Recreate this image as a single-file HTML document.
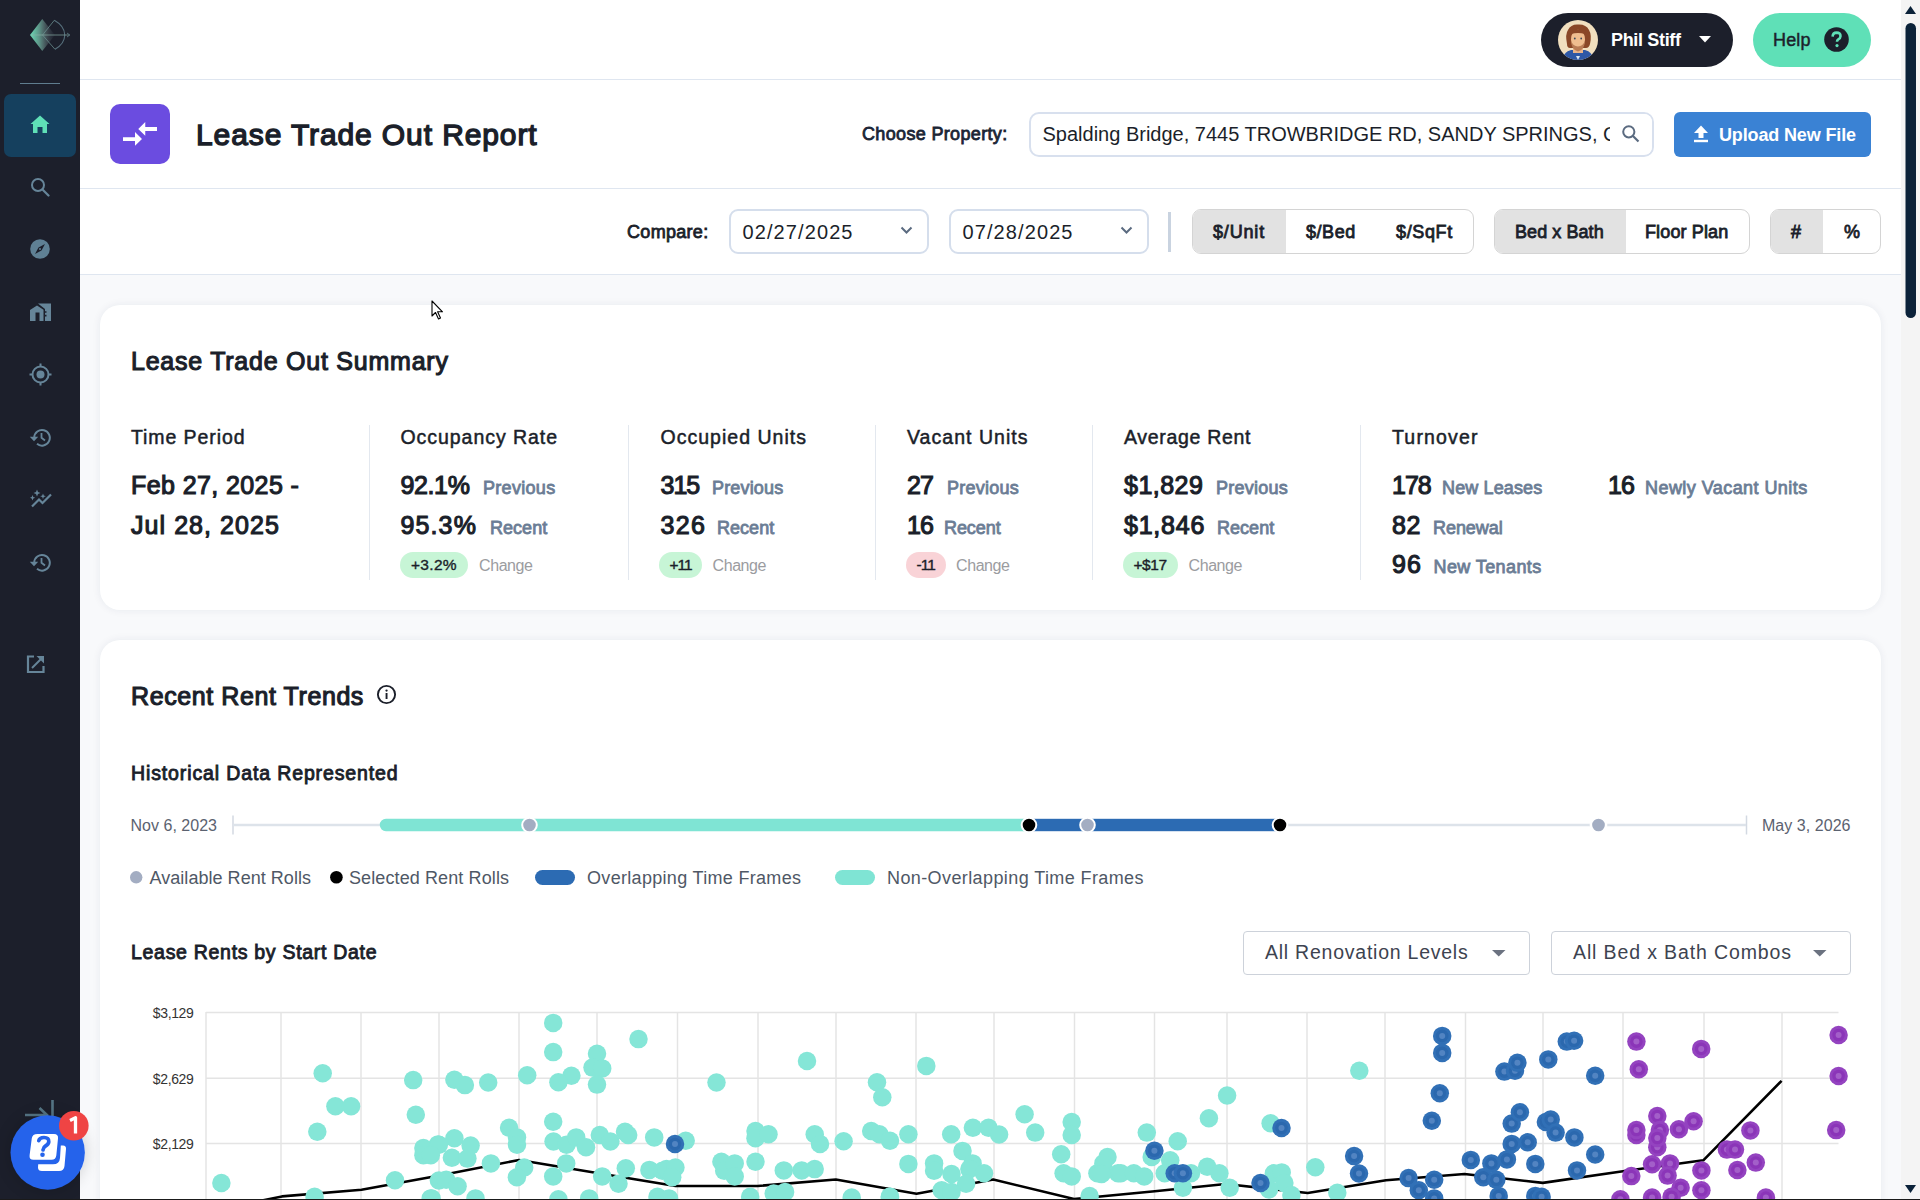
<!DOCTYPE html>
<html><head><meta charset="utf-8">
<style>
*{box-sizing:border-box;margin:0;padding:0}
html,body{width:1920px;height:1200px;overflow:hidden;background:#f8f9fb;font-family:"Liberation Sans",sans-serif;color:#1b1f2a}
.abs{position:absolute}
.t{position:absolute;white-space:nowrap;line-height:1}
#side{position:absolute;left:0;top:0;width:80px;height:1200px;background:#1c1f2b}
#hdr{position:absolute;left:80px;top:0;width:1821px;height:80px;background:#fff;border-bottom:1px solid #dfe6f0}
#ttl{position:absolute;left:80px;top:80px;width:1821px;height:109px;background:#fff;border-bottom:1px solid #dfe6f0}
#ctl{position:absolute;left:80px;top:189px;width:1821px;height:86px;background:#fff;border-bottom:1px solid #dfe6f0}
#sb{position:absolute;left:1901px;top:0;width:19px;height:1200px;background:#f4f4f4}
.card{position:absolute;left:100px;width:1781px;background:#fff;border-radius:20px;box-shadow:0 0 9px rgba(20,40,80,.075)}
</style></head><body>
<div id="hdr"></div>
<div id="ttl"></div>
<div id="ctl"></div>
<div class="card" style="top:305px;height:305px"></div>
<div class="card" style="top:640px;height:600px"></div>
<div id="sb"></div>
<div id="side"><svg class="abs" style="left:0;top:0" width="80" height="80" viewBox="0 0 80 80">
<defs><linearGradient id="lg" x1="30" y1="0" x2="56" y2="0" gradientUnits="userSpaceOnUse"><stop offset="0" stop-color="#6fe8c0" stop-opacity="0.95"/><stop offset="0.35" stop-color="#78c8b0" stop-opacity="0.7"/><stop offset="0.7" stop-color="#8aa0a0" stop-opacity="0.25"/><stop offset="1" stop-color="#5a6f80" stop-opacity="0"/></linearGradient></defs>
<polygon points="30,35 42.3,19 55,35 42.3,51" fill="url(#lg)"/>
<path d="M54.3,20.3 Q64.5,26 64.8,35 Q64.5,44 55,49.3" fill="none" stroke="#566f7c" stroke-width="1.1"/>
<path d="M54.3,20.3 L42.5,35 L55,49.3" fill="none" stroke="#6a9090" stroke-width="0.9" opacity="0.85"/>
<line x1="31" y1="35" x2="69.5" y2="35" stroke="#8ab0a8" stroke-width="0.9" opacity="0.75"/><path d="M67,33 L69.8,35 L67,37" fill="none" stroke="#5f7f88" stroke-width="0.8"/>
</svg><div class="abs" style="left:20px;top:83px;width:40px;height:1px;background:#5f7d8f"></div><div class="abs" style="left:4px;top:94px;width:72px;height:63px;border-radius:7px;background:#15405e"></div><svg class="abs" style="left:30px;top:115px" width="20" height="19" viewBox="0 0 20 19"><path d="M10,0.5 L19.5,9 L17,9 L17,18 L12.5,18 L12.5,12 L7.5,12 L7.5,18 L3,18 L3,9 L0.5,9 Z" fill="#5fe0b7"/></svg><svg class="abs" style="left:30px;top:177px" width="20" height="20" viewBox="0 0 20 20"><circle cx="8" cy="8" r="6" fill="none" stroke="#668599" stroke-width="2"/><line x1="12.5" y1="12.5" x2="18.5" y2="18.5" stroke="#668599" stroke-width="2.2" stroke-linecap="round"/></svg><svg class="abs" style="left:30px;top:239px" width="20" height="20" viewBox="0 0 20 20"><circle cx="10" cy="10" r="9.8" fill="#5f8094"/><path d="M15,5 L11.5,11.5 L5,15 L8.5,8.5 Z" fill="#1c1f2b"/><circle cx="10" cy="10" r="1" fill="#5f8094"/></svg><svg class="abs" style="left:30px;top:303px" width="22" height="19" viewBox="0 0 22 19"><path d="M0,7 L7,2.5 L13.5,6.8 L13.5,18 L9.5,18 L9.5,9.5 L5.5,9.5 L5.5,18 L0,18 Z" fill="#668599"/><path d="M8,0.5 L21,0.5 L21,18 L15,18 L15,13.5 L16.5,13.5 L16.5,11.8 L15,11.8 L15,9.8 L16.5,9.8 L16.5,8.2 L15,8.2 L15,6 Z" fill="#668599"/></svg><svg class="abs" style="left:29px;top:363px" width="23" height="23" viewBox="0 0 23 23"><circle cx="11.5" cy="11.5" r="8" fill="none" stroke="#668599" stroke-width="2"/><circle cx="11.5" cy="11.5" r="4" fill="#668599"/><path d="M11.5,0.5 V3.5 M11.5,19.5 V22.5 M0.5,11.5 H3.5 M19.5,11.5 H22.5" stroke="#668599" stroke-width="2"/></svg><svg class="abs" style="left:29px;top:428px" width="22" height="19" viewBox="0 0 22 19"><path d="M5.2,9.5 A7.8,7.8 0 1 1 8,15.8" fill="none" stroke="#668599" stroke-width="2"/><path d="M0.8,8.8 L9.2,8.8 L5,13.2 Z" fill="#668599"/><path d="M12.5,5 V9.8 L16,12.5" fill="none" stroke="#668599" stroke-width="1.8"/></svg><svg class="abs" style="left:29px;top:553px" width="22" height="19" viewBox="0 0 22 19"><path d="M5.2,9.5 A7.8,7.8 0 1 1 8,15.8" fill="none" stroke="#668599" stroke-width="2"/><path d="M0.8,8.8 L9.2,8.8 L5,13.2 Z" fill="#668599"/><path d="M12.5,5 V9.8 L16,12.5" fill="none" stroke="#668599" stroke-width="1.8"/></svg><svg class="abs" style="left:30px;top:489px" width="22" height="20" viewBox="0 0 22 20"><path d="M2,17.5 L9,10.5 L12.5,14 L21,5.5" fill="none" stroke="#668599" stroke-width="2.2"/><path d="M7,0.5 L8,3 L10.5,4 L8,5 L7,7.5 L6,5 L3.5,4 L6,3 Z" fill="#668599"/><path d="M2.5,6 L3.3,8 L5.2,8.7 L3.3,9.4 L2.5,11.4 L1.7,9.4 L-0.2,8.7 L1.7,8 Z" fill="#668599"/><path d="M13,4.5 L13.8,6.5 L15.8,7.2 L13.8,8 L13,10 L12.2,8 L10.2,7.2 L12.2,6.5 Z" fill="#668599"/></svg><svg class="abs" style="left:26px;top:655px" width="19" height="19" viewBox="0 0 19 19"><path d="M8,1.5 L2,1.5 L2,17 L17.5,17 L17.5,11" fill="none" stroke="#668599" stroke-width="2.2"/><path d="M10.5,1 L18,1 L18,8.5 Z" fill="#668599"/><line x1="6" y1="13" x2="15" y2="4" stroke="#668599" stroke-width="2"/></svg><svg class="abs" style="left:20px;top:1095px" width="40" height="25" viewBox="20 1095 40 25"><path d="M25,1115 L47,1115 M39.5,1108 L47,1115 L39.5,1122 M52.5,1100 V1125" fill="none" stroke="#557585" stroke-width="2.6"/></svg></div><div class="abs" style="left:10px;top:1115px;width:75px;height:75px;border-radius:50%;box-shadow:0 0 16px rgba(0,0,0,.18)"></div>
<svg class="abs" style="left:0;top:1095px" width="100" height="105" viewBox="0 1095 100 105"><circle cx="47.7" cy="1152.5" r="37.2" fill="#2563eb"/>
<path d="M37.5,1134 L54,1134 Q58.5,1134 58,1138.5 L56.3,1155.5 Q55.8,1159.7 51.5,1159.7 L33.5,1159.7 Q29,1159.7 29.6,1155.2 L31.8,1138.3 Q32.4,1134 37.5,1134 Z" fill="#fff"/>
<path d="M60.8,1145.5 L63,1145.5 Q66.3,1145.6 66,1149 L64.5,1166 Q64,1171 59,1171 L42,1171 Q38,1171 38,1167.5 L38.2,1164.3 L53,1164.3 Q59.5,1164.3 60,1158 Z" fill="#fff"/>
<path d="M38.8,1140.6 Q39.5,1137.5 44,1137.5 Q49.2,1137.6 48.8,1141.8 Q48.5,1144.4 45.5,1146 Q43.3,1147.2 43,1150" fill="none" stroke="#2563eb" stroke-width="3.7" stroke-linecap="round"/>
<circle cx="42.5" cy="1154.8" r="2.3" fill="#2563eb"/>
</svg>
<svg class="abs" style="left:59px;top:1111px" width="30" height="30" viewBox="0 0 30 30"><circle cx="14.8" cy="14.8" r="14.8" fill="#ef4444"/><path d="M11,9.5 L16.5,6.8 L16.5,22.5" fill="none" stroke="#fff" stroke-width="3.3" stroke-linejoin="round"/></svg><div class="abs" style="left:1541px;top:13px;width:192px;height:54px;border-radius:27px;background:#1c1f2b"></div><svg class="abs" style="left:1558px;top:20px" width="40" height="40" viewBox="0 0 40 40"><defs><clipPath id="av"><circle cx="20" cy="20" r="20"/></clipPath></defs><g clip-path="url(#av)"><rect width="40" height="40" fill="#f1dfbf"/>
<path d="M3,42 Q5,32 13,30 L27,30 Q35,32 37,42 Z" fill="#2e58a6"/><path d="M18,36 L20,40 L22,36 Z" fill="#dde6ee"/>
<rect x="15" y="25" width="10" height="8" fill="#e9b48a"/>
<path d="M9,24 Q7,14 10,10 Q13,4 20,4.5 Q28,4 31,10 Q34,15 32,24 Q31,28 28,28 L12,28 Q9,28 9,24 Z" fill="#8a4727"/>
<ellipse cx="20" cy="19.5" rx="7" ry="9.8" fill="#efbd8f"/>
<path d="M13,21 Q13.5,30 20,31.5 Q26.5,30 27,21 Q25,26 20,26.5 Q15,26 13,21 Z" fill="#b97c55"/>
<path d="M12.5,11 Q20,8 27.5,11 L27,14 Q20,12 13,14 Z" fill="#8a4727"/>
<circle cx="16.8" cy="18.5" r="0.9" fill="#3a4a5a"/><circle cx="23.2" cy="18.5" r="0.9" fill="#3a4a5a"/></g></svg><div class="t" style="left:1611.00px;top:30.76px;font-size:18px;color:#ffffff;font-weight:700;letter-spacing:-0.333px;">Phil Stiff</div>
<svg class="abs" style="left:1699px;top:36px" width="12" height="7" viewBox="0 0 12 7"><path d="M0,0 L12,0 L6,6.5 Z" fill="#fff"/></svg><div class="abs" style="left:1753px;top:13px;width:118px;height:54px;border-radius:27px;background:#5fe0b7"></div><div class="t" style="left:1773.00px;top:30.76px;font-size:18px;color:#1c1f2b;-webkit-text-stroke:0.45px #1c1f2b;letter-spacing:0.176px;">Help</div>
<svg class="abs" style="left:1824px;top:27px" width="25" height="25" viewBox="0 0 25 25"><circle cx="12.5" cy="12.5" r="12.3" fill="#1c1f2b"/><path d="M8.6,9.6 Q8.8,5.6 12.6,5.6 Q16.6,5.7 16.5,9.2 Q16.4,11.3 14.3,12.4 Q13,13.2 13,14.8" fill="none" stroke="#5fe0b7" stroke-width="2.6"/><circle cx="13" cy="18.6" r="1.6" fill="#5fe0b7"/></svg><div class="abs" style="left:110px;top:104px;width:60px;height:60px;border-radius:10px;background:#6b4ce0"></div><svg class="abs" style="left:110px;top:104px" width="60" height="60" viewBox="0 0 60 60"><path d="M28.25,25 L35.25,18 L35.25,23 L47,23 L47,27 L35.25,27 L35.25,31.75 Z" fill="#fff"/><path d="M32,35 L25,28 L25,33.25 L13,33.25 L13,37 L25,37 L25,41.75 Z" fill="#fff"/></svg><div class="t" style="left:196.00px;top:119.91px;font-size:30px;color:#1b1f2a;-webkit-text-stroke:1.35px #1b1f2a;letter-spacing:0.895px;">Lease Trade Out Report</div>
<div class="t" style="left:862.00px;top:124.76px;font-size:18px;color:#1b2535;-webkit-text-stroke:0.81px #1b2535;letter-spacing:0.341px;">Choose Property:</div>
<div class="abs" style="left:1029px;top:112px;width:625px;height:45px;border:2px solid #d8e0ee;border-radius:10px;background:#fff;overflow:hidden"><div style="position:absolute;left:582px;top:0;width:40px;height:40px;background:#fff"></div></div><div class="abs" style="left:1031px;top:114px;width:579px;height:40px;overflow:hidden"><div class="t" style="left:11.50px;top:9.67px;font-size:20px;color:#1b1f2a;">Spalding Bridge, 7445 TROWBRIDGE RD, SANDY SPRINGS, GA 30350</div>
</div><svg class="abs" style="left:1621px;top:124px" width="20" height="20" viewBox="0 0 20 20"><circle cx="7.8" cy="7.8" r="5.6" fill="none" stroke="#5b6b80" stroke-width="2"/><line x1="12" y1="12" x2="17.5" y2="17.5" stroke="#5b6b80" stroke-width="2.2"/></svg><div class="abs" style="left:1674px;top:112px;width:197px;height:45px;border-radius:6px;background:#3a82d4"></div><svg class="abs" style="left:1693px;top:125px" width="16" height="18" viewBox="0 0 16 18"><path d="M8,0.5 L15,8 L10.5,8 L10.5,13 L5.5,13 L5.5,8 L1,8 Z" fill="#fff"/><rect x="1" y="14.8" width="14" height="2.4" fill="#fff"/></svg><div class="t" style="left:1719.00px;top:125.96px;font-size:18px;color:#ffffff;font-weight:700;letter-spacing:-0.144px;">Upload New File</div>
<div class="t" style="left:627.00px;top:223.26px;font-size:18px;color:#1b1f2a;-webkit-text-stroke:0.81px #1b1f2a;letter-spacing:0.308px;">Compare:</div>
<div class="abs" style="left:729px;top:209px;width:200px;height:45px;border:2px solid #d5deec;border-radius:9px;background:#fff"></div><div class="t" style="left:742.50px;top:222.47px;font-size:20px;color:#1b1f2a;letter-spacing:1.100px;">02/27/2025</div>
<svg class="abs" style="left:900px;top:226px" width="13" height="9" viewBox="0 0 13 9"><path d="M1.5,1.5 L6.5,6.5 L11.5,1.5" fill="none" stroke="#5b6b80" stroke-width="2"/></svg><div class="abs" style="left:949px;top:209px;width:200px;height:45px;border:2px solid #d5deec;border-radius:9px;background:#fff"></div><div class="t" style="left:962.50px;top:222.47px;font-size:20px;color:#1b1f2a;letter-spacing:1.100px;">07/28/2025</div>
<svg class="abs" style="left:1120px;top:226px" width="13" height="9" viewBox="0 0 13 9"><path d="M1.5,1.5 L6.5,6.5 L11.5,1.5" fill="none" stroke="#5b6b80" stroke-width="2"/></svg><div class="abs" style="left:1168px;top:212px;width:3px;height:40px;background:#c9d3e0"></div><div class="abs" style="left:1192px;top:209px;width:282px;height:45px;border:1px solid #d4d4d4;border-radius:9px;background:#fff;overflow:hidden"><div style="position:absolute;left:0;top:0;width:93px;height:43px;background:#e2e2e2"></div></div><div class="t" style="left:1213.00px;top:223.36px;font-size:18px;color:#1b1f2a;-webkit-text-stroke:0.81px #1b1f2a;letter-spacing:0.834px;">$/Unit</div>
<div class="t" style="left:1306.00px;top:223.36px;font-size:18px;color:#1b1f2a;-webkit-text-stroke:0.81px #1b1f2a;letter-spacing:0.537px;">$/Bed</div>
<div class="t" style="left:1396.00px;top:223.36px;font-size:18px;color:#1b1f2a;-webkit-text-stroke:0.81px #1b1f2a;letter-spacing:0.633px;">$/SqFt</div>
<div class="abs" style="left:1494px;top:209px;width:256px;height:45px;border:1px solid #d4d4d4;border-radius:9px;background:#fff;overflow:hidden"><div style="position:absolute;left:0;top:0;width:131px;height:43px;background:#e2e2e2"></div></div><div class="t" style="left:1515.00px;top:223.36px;font-size:18px;color:#1b1f2a;-webkit-text-stroke:0.81px #1b1f2a;letter-spacing:0.070px;">Bed x Bath</div>
<div class="t" style="left:1645.00px;top:223.36px;font-size:18px;color:#1b1f2a;-webkit-text-stroke:0.81px #1b1f2a;letter-spacing:0.128px;">Floor Plan</div>
<div class="abs" style="left:1770px;top:209px;width:111px;height:45px;border:1px solid #d4d4d4;border-radius:9px;background:#fff;overflow:hidden"><div style="position:absolute;left:0;top:0;width:52px;height:43px;background:#e2e2e2"></div></div><div class="t" style="left:1791.00px;top:223.36px;font-size:18px;color:#1b1f2a;-webkit-text-stroke:0.81px #1b1f2a;">#</div>
<div class="t" style="left:1844.00px;top:223.36px;font-size:18px;color:#1b1f2a;-webkit-text-stroke:0.81px #1b1f2a;">%</div>
<div class="t" style="left:131.00px;top:348.84px;font-size:25px;color:#1b1f2a;-webkit-text-stroke:1.12px #1b1f2a;letter-spacing:0.761px;">Lease Trade Out Summary</div>
<div class="abs" style="left:369px;top:425px;width:1px;height:155px;background:#e3e8ef"></div><div class="abs" style="left:628px;top:425px;width:1px;height:155px;background:#e3e8ef"></div><div class="abs" style="left:875px;top:425px;width:1px;height:155px;background:#e3e8ef"></div><div class="abs" style="left:1092px;top:425px;width:1px;height:155px;background:#e3e8ef"></div><div class="abs" style="left:1360px;top:425px;width:1px;height:155px;background:#e3e8ef"></div><div class="t" style="left:131.00px;top:428.29px;font-size:19.5px;color:#1b1f2a;-webkit-text-stroke:0.49px #1b1f2a;letter-spacing:0.911px;">Time Period</div>
<div class="t" style="left:400.50px;top:428.29px;font-size:19.5px;color:#1b1f2a;-webkit-text-stroke:0.49px #1b1f2a;letter-spacing:0.950px;">Occupancy Rate</div>
<div class="t" style="left:660.50px;top:428.29px;font-size:19.5px;color:#1b1f2a;-webkit-text-stroke:0.49px #1b1f2a;letter-spacing:1.022px;">Occupied Units</div>
<div class="t" style="left:907.00px;top:428.29px;font-size:19.5px;color:#1b1f2a;-webkit-text-stroke:0.49px #1b1f2a;letter-spacing:1.037px;">Vacant Units</div>
<div class="t" style="left:1124.00px;top:428.29px;font-size:19.5px;color:#1b1f2a;-webkit-text-stroke:0.49px #1b1f2a;letter-spacing:0.693px;">Average Rent</div>
<div class="t" style="left:1392.00px;top:428.29px;font-size:19.5px;color:#1b1f2a;-webkit-text-stroke:0.49px #1b1f2a;letter-spacing:1.172px;">Turnover</div>
<div class="t" style="left:131.00px;top:472.84px;font-size:25px;color:#1b1f2a;-webkit-text-stroke:1.12px #1b1f2a;letter-spacing:0.405px;">Feb 27, 2025 -</div>
<div class="t" style="left:131.00px;top:512.84px;font-size:25px;color:#1b1f2a;-webkit-text-stroke:1.12px #1b1f2a;letter-spacing:1.059px;">Jul 28, 2025</div>
<div class="t" style="left:400.50px;top:472.84px;font-size:25px;color:#1b1f2a;-webkit-text-stroke:1.12px #1b1f2a;letter-spacing:-0.378px;">92.1%</div>
<div class="t" style="left:400.50px;top:512.84px;font-size:25px;color:#1b1f2a;-webkit-text-stroke:1.12px #1b1f2a;letter-spacing:1.122px;">95.3%</div>
<div class="t" style="left:660.50px;top:472.84px;font-size:25px;color:#1b1f2a;-webkit-text-stroke:1.12px #1b1f2a;letter-spacing:-1.000px;">315</div>
<div class="t" style="left:660.50px;top:512.84px;font-size:25px;color:#1b1f2a;-webkit-text-stroke:1.12px #1b1f2a;letter-spacing:1.331px;">326</div>
<div class="t" style="left:907.00px;top:472.84px;font-size:25px;color:#1b1f2a;-webkit-text-stroke:1.12px #1b1f2a;letter-spacing:-0.934px;">27</div>
<div class="t" style="left:907.00px;top:512.84px;font-size:25px;color:#1b1f2a;-webkit-text-stroke:1.12px #1b1f2a;letter-spacing:-1.000px;">16</div>
<div class="t" style="left:1124.00px;top:472.84px;font-size:25px;color:#1b1f2a;-webkit-text-stroke:1.12px #1b1f2a;letter-spacing:0.482px;">$1,829</div>
<div class="t" style="left:1124.00px;top:512.84px;font-size:25px;color:#1b1f2a;-webkit-text-stroke:1.12px #1b1f2a;letter-spacing:0.782px;">$1,846</div>
<div class="t" style="left:1392.00px;top:472.84px;font-size:25px;color:#1b1f2a;-webkit-text-stroke:1.12px #1b1f2a;letter-spacing:-1.000px;">178</div>
<div class="t" style="left:1392.00px;top:512.84px;font-size:25px;color:#1b1f2a;-webkit-text-stroke:1.12px #1b1f2a;letter-spacing:0.566px;">82</div>
<div class="t" style="left:1392.00px;top:551.84px;font-size:25px;color:#1b1f2a;-webkit-text-stroke:1.12px #1b1f2a;letter-spacing:1.066px;">96</div>
<div class="t" style="left:1608.00px;top:472.84px;font-size:25px;color:#1b1f2a;-webkit-text-stroke:1.12px #1b1f2a;letter-spacing:-1.000px;">16</div>
<div class="t" style="left:483.00px;top:478.76px;font-size:18px;color:#6b7d95;-webkit-text-stroke:0.81px #6b7d95;letter-spacing:0.308px;">Previous</div>
<div class="t" style="left:490.00px;top:518.76px;font-size:18px;color:#6b7d95;-webkit-text-stroke:0.81px #6b7d95;letter-spacing:0.031px;">Recent</div>
<div class="t" style="left:712.00px;top:478.76px;font-size:18px;color:#6b7d95;-webkit-text-stroke:0.81px #6b7d95;letter-spacing:0.165px;">Previous</div>
<div class="t" style="left:717.00px;top:518.76px;font-size:18px;color:#6b7d95;-webkit-text-stroke:0.81px #6b7d95;letter-spacing:0.031px;">Recent</div>
<div class="t" style="left:947.00px;top:478.76px;font-size:18px;color:#6b7d95;-webkit-text-stroke:0.81px #6b7d95;letter-spacing:0.237px;">Previous</div>
<div class="t" style="left:944.00px;top:518.76px;font-size:18px;color:#6b7d95;-webkit-text-stroke:0.81px #6b7d95;letter-spacing:-0.069px;">Recent</div>
<div class="t" style="left:1216.00px;top:478.76px;font-size:18px;color:#6b7d95;-webkit-text-stroke:0.81px #6b7d95;letter-spacing:0.237px;">Previous</div>
<div class="t" style="left:1217.00px;top:518.76px;font-size:18px;color:#6b7d95;-webkit-text-stroke:0.81px #6b7d95;letter-spacing:0.031px;">Recent</div>
<div class="t" style="left:1442.00px;top:478.76px;font-size:18px;color:#6b7d95;-webkit-text-stroke:0.81px #6b7d95;letter-spacing:0.126px;">New Leases</div>
<div class="t" style="left:1433.00px;top:518.76px;font-size:18px;color:#6b7d95;-webkit-text-stroke:0.81px #6b7d95;letter-spacing:-0.059px;">Renewal</div>
<div class="t" style="left:1433.50px;top:557.76px;font-size:18px;color:#6b7d95;-webkit-text-stroke:0.81px #6b7d95;letter-spacing:0.396px;">New Tenants</div>
<div class="t" style="left:1645.00px;top:478.76px;font-size:18px;color:#6b7d95;-webkit-text-stroke:0.81px #6b7d95;letter-spacing:0.439px;">Newly Vacant Units</div>
<div class="abs" style="left:400px;top:552px;width:68px;height:26px;border-radius:13px;background:#c7f5d6"></div><div class="t" style="left:411.00px;top:556.88px;font-size:15.5px;color:#1b1f2a;-webkit-text-stroke:0.39px #1b1f2a;letter-spacing:0.308px;">+3.2%</div>
<div class="abs" style="left:659px;top:552px;width:43px;height:26px;border-radius:13px;background:#c7f5d6"></div><div class="t" style="left:669.50px;top:556.88px;font-size:15.5px;color:#1b1f2a;-webkit-text-stroke:0.39px #1b1f2a;letter-spacing:-1.000px;">+11</div>
<div class="abs" style="left:906px;top:552px;width:40px;height:26px;border-radius:13px;background:#f9d3d7"></div><div class="t" style="left:916.50px;top:556.88px;font-size:15.5px;color:#1b1f2a;-webkit-text-stroke:0.39px #1b1f2a;letter-spacing:-1.000px;">-11</div>
<div class="abs" style="left:1123px;top:552px;width:55px;height:26px;border-radius:13px;background:#c7f5d6"></div><div class="t" style="left:1133.50px;top:556.88px;font-size:15.5px;color:#1b1f2a;-webkit-text-stroke:0.39px #1b1f2a;letter-spacing:-0.434px;">+$17</div>
<div class="t" style="left:479.00px;top:557.76px;font-size:16px;color:#9b9c9f;letter-spacing:-0.410px;">Change</div>
<div class="t" style="left:712.50px;top:557.76px;font-size:16px;color:#9b9c9f;letter-spacing:-0.410px;">Change</div>
<div class="t" style="left:956.00px;top:557.76px;font-size:16px;color:#9b9c9f;letter-spacing:-0.410px;">Change</div>
<div class="t" style="left:1188.50px;top:557.76px;font-size:16px;color:#9b9c9f;letter-spacing:-0.410px;">Change</div>
<div class="t" style="left:131.00px;top:683.54px;font-size:25px;color:#1b1f2a;-webkit-text-stroke:1.12px #1b1f2a;letter-spacing:0.590px;">Recent Rent Trends</div>
<svg class="abs" style="left:376px;top:684px" width="21" height="21" viewBox="0 0 21 21"><circle cx="10.5" cy="10.5" r="8.6" fill="none" stroke="#1b1f2a" stroke-width="1.9"/><rect x="9.6" y="9" width="1.9" height="6" fill="#1b1f2a"/><circle cx="10.55" cy="6.6" r="1.15" fill="#1b1f2a"/></svg><div class="t" style="left:131.00px;top:763.74px;font-size:19.5px;color:#1b1f2a;-webkit-text-stroke:0.88px #1b1f2a;letter-spacing:0.875px;">Historical Data Represented</div>
<div class="t" style="left:130.50px;top:817.96px;font-size:16px;color:#5b6270;letter-spacing:0.022px;">Nov 6, 2023</div>
<div class="t" style="left:1762.00px;top:817.66px;font-size:16px;color:#5b6270;letter-spacing:0.044px;">May 3, 2026</div>
<svg class="abs" style="left:200px;top:800px" width="1600" height="50" viewBox="200 800 1600 50">
<line x1="233" y1="815.5" x2="233" y2="834.5" stroke="#d3d9e2" stroke-width="1.5"/>
<line x1="1746.5" y1="815.5" x2="1746.5" y2="834.5" stroke="#d3d9e2" stroke-width="1.5"/>
<line x1="233" y1="825" x2="1746" y2="825" stroke="#dde3ea" stroke-width="2.5"/>
<path d="M386,818.8 L1029,818.8 L1029,831.2 L386,831.2 A6.2,6.2 0 0 1 386,818.8 Z" fill="#7fe4d4"/>
<rect x="1029" y="818.8" width="251" height="12.4" fill="#2c6bb3"/>
<circle cx="529.5" cy="825" r="7.3" fill="#a3adc2" stroke="#fff" stroke-width="2"/>
<circle cx="1087.5" cy="825" r="7.3" fill="#a3adc2" stroke="#fff" stroke-width="2"/>
<circle cx="1598.5" cy="825" r="7.6" fill="#a3adc2" stroke="#fff" stroke-width="2.5"/>
<circle cx="1029" cy="825" r="7.3" fill="#000" stroke="#fff" stroke-width="2"/>
<circle cx="1280" cy="825" r="7.3" fill="#000" stroke="#fff" stroke-width="2"/>
</svg><svg class="abs" style="left:125px;top:865px" width="760" height="25" viewBox="125 865 760 25"><circle cx="136.2" cy="877.3" r="6.2" fill="#a3adc2"/><circle cx="336.4" cy="877.3" r="6.3" fill="#000"/><rect x="535" y="870" width="40" height="15" rx="7.5" fill="#2c6bb3"/><rect x="835" y="870" width="40" height="15" rx="7.5" fill="#7fe4d4"/></svg><div class="t" style="left:149.50px;top:868.76px;font-size:18px;color:#4f5866;letter-spacing:0.039px;">Available Rent Rolls</div>
<div class="t" style="left:349.00px;top:868.76px;font-size:18px;color:#4f5866;letter-spacing:0.106px;">Selected Rent Rolls</div>
<div class="t" style="left:587.00px;top:868.76px;font-size:18px;color:#4f5866;letter-spacing:0.315px;">Overlapping Time Frames</div>
<div class="t" style="left:887.00px;top:868.76px;font-size:18px;color:#4f5866;letter-spacing:0.400px;">Non-Overlapping Time Frames</div>
<div class="t" style="left:131.00px;top:943.19px;font-size:19.5px;color:#1b1f2a;-webkit-text-stroke:0.88px #1b1f2a;letter-spacing:0.701px;">Lease Rents by Start Date</div>
<div class="abs" style="left:1243px;top:931px;width:287px;height:44px;border:1px solid #cdd2da;border-radius:4px;background:#fff"></div><div class="t" style="left:1265.00px;top:943.49px;font-size:19.5px;color:#3d4350;letter-spacing:0.758px;">All Renovation Levels</div>
<svg class="abs" style="left:1492px;top:950px" width="14" height="7" viewBox="0 0 14 7"><path d="M0,0 L13.5,0 L6.75,6.5 Z" fill="#6b7280"/></svg><div class="abs" style="left:1551px;top:931px;width:300px;height:44px;border:1px solid #cdd2da;border-radius:4px;background:#fff"></div><div class="t" style="left:1573.00px;top:943.49px;font-size:19.5px;color:#3d4350;letter-spacing:0.874px;">All Bed x Bath Combos</div>
<svg class="abs" style="left:1813px;top:950px" width="14" height="7" viewBox="0 0 14 7"><path d="M0,0 L13.5,0 L6.75,6.5 Z" fill="#6b7280"/></svg><svg class="abs" style="left:100px;top:995px" width="1780" height="205" viewBox="100 995 1780 205"><line x1="206" y1="1012.5" x2="1838.5" y2="1012.5" stroke="#e4e4e4" stroke-width="1.5"/><line x1="206" y1="1078.3" x2="1838.5" y2="1078.3" stroke="#e4e4e4" stroke-width="1.5"/><line x1="206" y1="1143.5" x2="1838.5" y2="1143.5" stroke="#e4e4e4" stroke-width="1.5"/><line x1="206.0" y1="1012" x2="206.0" y2="1200" stroke="#e4e4e4" stroke-width="1.5"/><line x1="281.0" y1="1012" x2="281.0" y2="1200" stroke="#e4e4e4" stroke-width="1.5"/><line x1="361.0" y1="1012" x2="361.0" y2="1200" stroke="#e4e4e4" stroke-width="1.5"/><line x1="439.0" y1="1012" x2="439.0" y2="1200" stroke="#e4e4e4" stroke-width="1.5"/><line x1="519.0" y1="1012" x2="519.0" y2="1200" stroke="#e4e4e4" stroke-width="1.5"/><line x1="597.0" y1="1012" x2="597.0" y2="1200" stroke="#e4e4e4" stroke-width="1.5"/><line x1="677.5" y1="1012" x2="677.5" y2="1200" stroke="#e4e4e4" stroke-width="1.5"/><line x1="758.0" y1="1012" x2="758.0" y2="1200" stroke="#e4e4e4" stroke-width="1.5"/><line x1="836.0" y1="1012" x2="836.0" y2="1200" stroke="#e4e4e4" stroke-width="1.5"/><line x1="916.0" y1="1012" x2="916.0" y2="1200" stroke="#e4e4e4" stroke-width="1.5"/><line x1="994.0" y1="1012" x2="994.0" y2="1200" stroke="#e4e4e4" stroke-width="1.5"/><line x1="1074.5" y1="1012" x2="1074.5" y2="1200" stroke="#e4e4e4" stroke-width="1.5"/><line x1="1154.5" y1="1012" x2="1154.5" y2="1200" stroke="#e4e4e4" stroke-width="1.5"/><line x1="1227.0" y1="1012" x2="1227.0" y2="1200" stroke="#e4e4e4" stroke-width="1.5"/><line x1="1307.0" y1="1012" x2="1307.0" y2="1200" stroke="#e4e4e4" stroke-width="1.5"/><line x1="1385.0" y1="1012" x2="1385.0" y2="1200" stroke="#e4e4e4" stroke-width="1.5"/><line x1="1465.5" y1="1012" x2="1465.5" y2="1200" stroke="#e4e4e4" stroke-width="1.5"/><line x1="1543.0" y1="1012" x2="1543.0" y2="1200" stroke="#e4e4e4" stroke-width="1.5"/><line x1="1623.0" y1="1012" x2="1623.0" y2="1200" stroke="#e4e4e4" stroke-width="1.5"/><line x1="1704.0" y1="1012" x2="1704.0" y2="1200" stroke="#e4e4e4" stroke-width="1.5"/><line x1="1782.0" y1="1012" x2="1782.0" y2="1200" stroke="#e4e4e4" stroke-width="1.5"/><polyline points="206.0,1212.0 282.0,1196.4 361.5,1189.8 439.6,1175.5 519.0,1160.0 597.0,1173.0 675.6,1186.0 757.7,1186.0 835.8,1179.5 916.5,1193.8 993.3,1179.5 1074.0,1199.0 1154.8,1191.2 1225.7,1184.0 1307.7,1193.0 1386.0,1180.3 1464.5,1174.0 1542.8,1182.9 1623.0,1171.2 1703.3,1160.3 1781.6,1080.8" fill="none" stroke="#000" stroke-width="2.6" stroke-linejoin="round"/><circle cx="221.4" cy="1183.0" r="9.25" fill="#85e6d7"/><circle cx="322.7" cy="1073.2" r="9.25" fill="#85e6d7"/><circle cx="335.4" cy="1106.2" r="9.25" fill="#85e6d7"/><circle cx="351.1" cy="1106.2" r="9.25" fill="#85e6d7"/><circle cx="317.3" cy="1131.7" r="9.25" fill="#85e6d7"/><circle cx="314.6" cy="1196.7" r="9.25" fill="#85e6d7"/><circle cx="413.2" cy="1080.1" r="9.25" fill="#85e6d7"/><circle cx="415.8" cy="1114.7" r="9.25" fill="#85e6d7"/><circle cx="423.4" cy="1148.0" r="9.25" fill="#85e6d7"/><circle cx="423.4" cy="1155.3" r="9.25" fill="#85e6d7"/><circle cx="438.0" cy="1144.4" r="9.25" fill="#85e6d7"/><circle cx="395.0" cy="1180.2" r="9.25" fill="#85e6d7"/><circle cx="430.7" cy="1198.4" r="9.25" fill="#85e6d7"/><circle cx="438.9" cy="1180.5" r="9.25" fill="#85e6d7"/><circle cx="553.2" cy="1022.9" r="9.25" fill="#85e6d7"/><circle cx="553.2" cy="1052.1" r="9.25" fill="#85e6d7"/><circle cx="638.5" cy="1039.1" r="9.25" fill="#85e6d7"/><circle cx="597.0" cy="1053.7" r="9.25" fill="#85e6d7"/><circle cx="592.5" cy="1067.6" r="9.25" fill="#85e6d7"/><circle cx="602.2" cy="1068.4" r="9.25" fill="#85e6d7"/><circle cx="597.0" cy="1084.6" r="9.25" fill="#85e6d7"/><circle cx="571.4" cy="1075.7" r="9.25" fill="#85e6d7"/><circle cx="558.4" cy="1082.2" r="9.25" fill="#85e6d7"/><circle cx="527.2" cy="1075.2" r="9.25" fill="#85e6d7"/><circle cx="454.4" cy="1079.7" r="9.25" fill="#85e6d7"/><circle cx="464.9" cy="1085.1" r="9.25" fill="#85e6d7"/><circle cx="488.2" cy="1082.5" r="9.25" fill="#85e6d7"/><circle cx="509.1" cy="1127.7" r="9.25" fill="#85e6d7"/><circle cx="517.0" cy="1137.4" r="9.25" fill="#85e6d7"/><circle cx="517.0" cy="1144.7" r="9.25" fill="#85e6d7"/><circle cx="553.2" cy="1121.7" r="9.25" fill="#85e6d7"/><circle cx="454.4" cy="1138.2" r="9.25" fill="#85e6d7"/><circle cx="438.9" cy="1144.7" r="9.25" fill="#85e6d7"/><circle cx="451.9" cy="1157.7" r="9.25" fill="#85e6d7"/><circle cx="470.6" cy="1145.6" r="9.25" fill="#85e6d7"/><circle cx="467.4" cy="1158.6" r="9.25" fill="#85e6d7"/><circle cx="430.8" cy="1155.3" r="9.25" fill="#85e6d7"/><circle cx="553.5" cy="1141.5" r="9.25" fill="#85e6d7"/><circle cx="566.5" cy="1144.7" r="9.25" fill="#85e6d7"/><circle cx="576.2" cy="1137.4" r="9.25" fill="#85e6d7"/><circle cx="586.0" cy="1147.2" r="9.25" fill="#85e6d7"/><circle cx="599.8" cy="1135.0" r="9.25" fill="#85e6d7"/><circle cx="610.4" cy="1141.5" r="9.25" fill="#85e6d7"/><circle cx="625.0" cy="1131.7" r="9.25" fill="#85e6d7"/><circle cx="628.2" cy="1135.0" r="9.25" fill="#85e6d7"/><circle cx="654.2" cy="1137.4" r="9.25" fill="#85e6d7"/><circle cx="490.9" cy="1163.4" r="9.25" fill="#85e6d7"/><circle cx="524.2" cy="1167.5" r="9.25" fill="#85e6d7"/><circle cx="516.9" cy="1177.2" r="9.25" fill="#85e6d7"/><circle cx="553.2" cy="1176.4" r="9.25" fill="#85e6d7"/><circle cx="566.2" cy="1163.4" r="9.25" fill="#85e6d7"/><circle cx="602.2" cy="1176.4" r="9.25" fill="#85e6d7"/><circle cx="618.5" cy="1183.7" r="9.25" fill="#85e6d7"/><circle cx="625.8" cy="1168.3" r="9.25" fill="#85e6d7"/><circle cx="649.4" cy="1169.9" r="9.25" fill="#85e6d7"/><circle cx="662.4" cy="1170.7" r="9.25" fill="#85e6d7"/><circle cx="446.2" cy="1179.7" r="9.25" fill="#85e6d7"/><circle cx="457.6" cy="1186.2" r="9.25" fill="#85e6d7"/><circle cx="475.5" cy="1198.4" r="9.25" fill="#85e6d7"/><circle cx="558.4" cy="1199.2" r="9.25" fill="#85e6d7"/><circle cx="589.2" cy="1198.4" r="9.25" fill="#85e6d7"/><circle cx="657.5" cy="1196.7" r="9.25" fill="#85e6d7"/><circle cx="431.6" cy="1198.4" r="9.25" fill="#85e6d7"/><circle cx="685.7" cy="1140.7" r="9.25" fill="#85e6d7"/><circle cx="716.5" cy="1082.5" r="9.25" fill="#85e6d7"/><circle cx="807.0" cy="1061.0" r="9.25" fill="#85e6d7"/><circle cx="877.0" cy="1082.2" r="9.25" fill="#85e6d7"/><circle cx="882.3" cy="1097.3" r="9.25" fill="#85e6d7"/><circle cx="666.5" cy="1169.1" r="9.25" fill="#85e6d7"/><circle cx="675.4" cy="1167.5" r="9.25" fill="#85e6d7"/><circle cx="672.2" cy="1177.2" r="9.25" fill="#85e6d7"/><circle cx="721.4" cy="1161.8" r="9.25" fill="#85e6d7"/><circle cx="724.2" cy="1170.7" r="9.25" fill="#85e6d7"/><circle cx="734.7" cy="1163.4" r="9.25" fill="#85e6d7"/><circle cx="734.7" cy="1176.4" r="9.25" fill="#85e6d7"/><circle cx="755.5" cy="1161.8" r="9.25" fill="#85e6d7"/><circle cx="755.5" cy="1131.0" r="9.25" fill="#85e6d7"/><circle cx="755.5" cy="1138.2" r="9.25" fill="#85e6d7"/><circle cx="768.5" cy="1134.2" r="9.25" fill="#85e6d7"/><circle cx="783.8" cy="1170.4" r="9.25" fill="#85e6d7"/><circle cx="801.7" cy="1170.4" r="9.25" fill="#85e6d7"/><circle cx="814.7" cy="1169.1" r="9.25" fill="#85e6d7"/><circle cx="814.7" cy="1134.2" r="9.25" fill="#85e6d7"/><circle cx="820.0" cy="1144.0" r="9.25" fill="#85e6d7"/><circle cx="843.6" cy="1141.2" r="9.25" fill="#85e6d7"/><circle cx="871.2" cy="1131.0" r="9.25" fill="#85e6d7"/><circle cx="879.4" cy="1134.2" r="9.25" fill="#85e6d7"/><circle cx="890.0" cy="1140.7" r="9.25" fill="#85e6d7"/><circle cx="669.0" cy="1198.4" r="9.25" fill="#85e6d7"/><circle cx="750.2" cy="1196.7" r="9.25" fill="#85e6d7"/><circle cx="773.7" cy="1193.5" r="9.25" fill="#85e6d7"/><circle cx="785.1" cy="1191.9" r="9.25" fill="#85e6d7"/><circle cx="851.7" cy="1197.6" r="9.25" fill="#85e6d7"/><circle cx="890.0" cy="1196.7" r="9.25" fill="#85e6d7"/><circle cx="926.3" cy="1065.9" r="9.25" fill="#85e6d7"/><circle cx="908.4" cy="1134.2" r="9.25" fill="#85e6d7"/><circle cx="908.4" cy="1163.9" r="9.25" fill="#85e6d7"/><circle cx="934.1" cy="1163.4" r="9.25" fill="#85e6d7"/><circle cx="934.1" cy="1170.7" r="9.25" fill="#85e6d7"/><circle cx="951.2" cy="1134.2" r="9.25" fill="#85e6d7"/><circle cx="962.5" cy="1150.9" r="9.25" fill="#85e6d7"/><circle cx="972.9" cy="1127.7" r="9.25" fill="#85e6d7"/><circle cx="988.5" cy="1127.7" r="9.25" fill="#85e6d7"/><circle cx="999.1" cy="1134.5" r="9.25" fill="#85e6d7"/><circle cx="1024.6" cy="1114.2" r="9.25" fill="#85e6d7"/><circle cx="1035.2" cy="1132.6" r="9.25" fill="#85e6d7"/><circle cx="1071.7" cy="1122.0" r="9.25" fill="#85e6d7"/><circle cx="1071.7" cy="1135.0" r="9.25" fill="#85e6d7"/><circle cx="1061.2" cy="1154.2" r="9.25" fill="#85e6d7"/><circle cx="1063.6" cy="1173.2" r="9.25" fill="#85e6d7"/><circle cx="1071.7" cy="1176.4" r="9.25" fill="#85e6d7"/><circle cx="1097.4" cy="1173.2" r="9.25" fill="#85e6d7"/><circle cx="1107.5" cy="1157.0" r="9.25" fill="#85e6d7"/><circle cx="1103.4" cy="1163.4" r="9.25" fill="#85e6d7"/><circle cx="1118.0" cy="1173.2" r="9.25" fill="#85e6d7"/><circle cx="972.6" cy="1163.4" r="9.25" fill="#85e6d7"/><circle cx="969.4" cy="1169.1" r="9.25" fill="#85e6d7"/><circle cx="951.5" cy="1174.0" r="9.25" fill="#85e6d7"/><circle cx="984.0" cy="1173.2" r="9.25" fill="#85e6d7"/><circle cx="966.1" cy="1183.7" r="9.25" fill="#85e6d7"/><circle cx="941.7" cy="1190.2" r="9.25" fill="#85e6d7"/><circle cx="951.5" cy="1191.9" r="9.25" fill="#85e6d7"/><circle cx="1089.6" cy="1196.0" r="9.25" fill="#85e6d7"/><circle cx="889.8" cy="1196.7" r="9.25" fill="#85e6d7"/><circle cx="1227.1" cy="1095.5" r="9.25" fill="#85e6d7"/><circle cx="1208.9" cy="1118.3" r="9.25" fill="#85e6d7"/><circle cx="1270.6" cy="1123.3" r="9.25" fill="#85e6d7"/><circle cx="1146.8" cy="1132.6" r="9.25" fill="#85e6d7"/><circle cx="1177.7" cy="1141.2" r="9.25" fill="#85e6d7"/><circle cx="1101.6" cy="1174.0" r="9.25" fill="#85e6d7"/><circle cx="1120.8" cy="1173.2" r="9.25" fill="#85e6d7"/><circle cx="1133.8" cy="1173.2" r="9.25" fill="#85e6d7"/><circle cx="1144.2" cy="1176.4" r="9.25" fill="#85e6d7"/><circle cx="1151.7" cy="1156.9" r="9.25" fill="#85e6d7"/><circle cx="1170.2" cy="1160.2" r="9.25" fill="#85e6d7"/><circle cx="1164.7" cy="1173.2" r="9.25" fill="#85e6d7"/><circle cx="1191.0" cy="1173.2" r="9.25" fill="#85e6d7"/><circle cx="1207.2" cy="1166.7" r="9.25" fill="#85e6d7"/><circle cx="1219.4" cy="1173.2" r="9.25" fill="#85e6d7"/><circle cx="1182.9" cy="1187.8" r="9.25" fill="#85e6d7"/><circle cx="1229.7" cy="1187.8" r="9.25" fill="#85e6d7"/><circle cx="1273.9" cy="1173.2" r="9.25" fill="#85e6d7"/><circle cx="1281.7" cy="1172.4" r="9.25" fill="#85e6d7"/><circle cx="1284.4" cy="1183.0" r="9.25" fill="#85e6d7"/><circle cx="1269.0" cy="1189.4" r="9.25" fill="#85e6d7"/><circle cx="1291.4" cy="1195.1" r="9.25" fill="#85e6d7"/><circle cx="1315.3" cy="1167.2" r="9.25" fill="#85e6d7"/><circle cx="1337.3" cy="1192.7" r="9.25" fill="#85e6d7"/><circle cx="1359.3" cy="1070.8" r="9.25" fill="#85e6d7"/><circle cx="675.0" cy="1144.0" r="9.25" fill="#3170b6"/><circle cx="675.0" cy="1144.0" r="6.3" fill="#2b68ae"/><circle cx="675.0" cy="1144.0" r="3" fill="#5284c2"/><circle cx="1281.5" cy="1128.0" r="9.25" fill="#3170b6"/><circle cx="1281.5" cy="1128.0" r="6.3" fill="#2b68ae"/><circle cx="1281.5" cy="1128.0" r="3" fill="#5284c2"/><circle cx="1154.4" cy="1150.8" r="9.25" fill="#3170b6"/><circle cx="1154.4" cy="1150.8" r="6.3" fill="#2b68ae"/><circle cx="1154.4" cy="1150.8" r="3" fill="#5284c2"/><circle cx="1174.7" cy="1173.2" r="9.25" fill="#3170b6"/><circle cx="1174.7" cy="1173.2" r="6.3" fill="#2b68ae"/><circle cx="1174.7" cy="1173.2" r="3" fill="#5284c2"/><circle cx="1182.9" cy="1173.2" r="9.25" fill="#3170b6"/><circle cx="1182.9" cy="1173.2" r="6.3" fill="#2b68ae"/><circle cx="1182.9" cy="1173.2" r="3" fill="#5284c2"/><circle cx="1260.5" cy="1183.0" r="9.25" fill="#3170b6"/><circle cx="1260.5" cy="1183.0" r="6.3" fill="#2b68ae"/><circle cx="1260.5" cy="1183.0" r="3" fill="#5284c2"/><circle cx="1442.2" cy="1035.9" r="9.25" fill="#3170b6"/><circle cx="1442.2" cy="1035.9" r="6.3" fill="#2b68ae"/><circle cx="1442.2" cy="1035.9" r="3" fill="#5284c2"/><circle cx="1442.2" cy="1052.9" r="9.25" fill="#3170b6"/><circle cx="1442.2" cy="1052.9" r="6.3" fill="#2b68ae"/><circle cx="1442.2" cy="1052.9" r="3" fill="#5284c2"/><circle cx="1439.8" cy="1093.2" r="9.25" fill="#3170b6"/><circle cx="1439.8" cy="1093.2" r="6.3" fill="#2b68ae"/><circle cx="1439.8" cy="1093.2" r="3" fill="#5284c2"/><circle cx="1431.8" cy="1120.7" r="9.25" fill="#3170b6"/><circle cx="1431.8" cy="1120.7" r="6.3" fill="#2b68ae"/><circle cx="1431.8" cy="1120.7" r="3" fill="#5284c2"/><circle cx="1354.1" cy="1156.1" r="9.25" fill="#3170b6"/><circle cx="1354.1" cy="1156.1" r="6.3" fill="#2b68ae"/><circle cx="1354.1" cy="1156.1" r="3" fill="#5284c2"/><circle cx="1359.0" cy="1173.5" r="9.25" fill="#3170b6"/><circle cx="1359.0" cy="1173.5" r="6.3" fill="#2b68ae"/><circle cx="1359.0" cy="1173.5" r="3" fill="#5284c2"/><circle cx="1408.6" cy="1178.1" r="9.25" fill="#3170b6"/><circle cx="1408.6" cy="1178.1" r="6.3" fill="#2b68ae"/><circle cx="1408.6" cy="1178.1" r="3" fill="#5284c2"/><circle cx="1418.8" cy="1190.2" r="9.25" fill="#3170b6"/><circle cx="1418.8" cy="1190.2" r="6.3" fill="#2b68ae"/><circle cx="1418.8" cy="1190.2" r="3" fill="#5284c2"/><circle cx="1434.2" cy="1179.7" r="9.25" fill="#3170b6"/><circle cx="1434.2" cy="1179.7" r="6.3" fill="#2b68ae"/><circle cx="1434.2" cy="1179.7" r="3" fill="#5284c2"/><circle cx="1434.2" cy="1198.4" r="9.25" fill="#3170b6"/><circle cx="1434.2" cy="1198.4" r="6.3" fill="#2b68ae"/><circle cx="1434.2" cy="1198.4" r="3" fill="#5284c2"/><circle cx="1470.8" cy="1159.9" r="9.25" fill="#3170b6"/><circle cx="1470.8" cy="1159.9" r="6.3" fill="#2b68ae"/><circle cx="1470.8" cy="1159.9" r="3" fill="#5284c2"/><circle cx="1483.3" cy="1177.2" r="9.25" fill="#3170b6"/><circle cx="1483.3" cy="1177.2" r="6.3" fill="#2b68ae"/><circle cx="1483.3" cy="1177.2" r="3" fill="#5284c2"/><circle cx="1491.4" cy="1163.4" r="9.25" fill="#3170b6"/><circle cx="1491.4" cy="1163.4" r="6.3" fill="#2b68ae"/><circle cx="1491.4" cy="1163.4" r="3" fill="#5284c2"/><circle cx="1496.3" cy="1179.7" r="9.25" fill="#3170b6"/><circle cx="1496.3" cy="1179.7" r="6.3" fill="#2b68ae"/><circle cx="1496.3" cy="1179.7" r="3" fill="#5284c2"/><circle cx="1506.9" cy="1159.4" r="9.25" fill="#3170b6"/><circle cx="1506.9" cy="1159.4" r="6.3" fill="#2b68ae"/><circle cx="1506.9" cy="1159.4" r="3" fill="#5284c2"/><circle cx="1498.7" cy="1195.9" r="9.25" fill="#3170b6"/><circle cx="1498.7" cy="1195.9" r="6.3" fill="#2b68ae"/><circle cx="1498.7" cy="1195.9" r="3" fill="#5284c2"/><circle cx="1511.7" cy="1143.9" r="9.25" fill="#3170b6"/><circle cx="1511.7" cy="1143.9" r="6.3" fill="#2b68ae"/><circle cx="1511.7" cy="1143.9" r="3" fill="#5284c2"/><circle cx="1527.7" cy="1142.3" r="9.25" fill="#3170b6"/><circle cx="1527.7" cy="1142.3" r="6.3" fill="#2b68ae"/><circle cx="1527.7" cy="1142.3" r="3" fill="#5284c2"/><circle cx="1535.3" cy="1163.9" r="9.25" fill="#3170b6"/><circle cx="1535.3" cy="1163.9" r="6.3" fill="#2b68ae"/><circle cx="1535.3" cy="1163.9" r="3" fill="#5284c2"/><circle cx="1535.3" cy="1195.9" r="9.25" fill="#3170b6"/><circle cx="1535.3" cy="1195.9" r="6.3" fill="#2b68ae"/><circle cx="1535.3" cy="1195.9" r="3" fill="#5284c2"/><circle cx="1511.7" cy="1123.6" r="9.25" fill="#3170b6"/><circle cx="1511.7" cy="1123.6" r="6.3" fill="#2b68ae"/><circle cx="1511.7" cy="1123.6" r="3" fill="#5284c2"/><circle cx="1519.9" cy="1112.2" r="9.25" fill="#3170b6"/><circle cx="1519.9" cy="1112.2" r="6.3" fill="#2b68ae"/><circle cx="1519.9" cy="1112.2" r="3" fill="#5284c2"/><circle cx="1504.4" cy="1071.6" r="9.25" fill="#3170b6"/><circle cx="1504.4" cy="1071.6" r="6.3" fill="#2b68ae"/><circle cx="1504.4" cy="1071.6" r="3" fill="#5284c2"/><circle cx="1515.0" cy="1070.8" r="9.25" fill="#3170b6"/><circle cx="1515.0" cy="1070.8" r="6.3" fill="#2b68ae"/><circle cx="1515.0" cy="1070.8" r="3" fill="#5284c2"/><circle cx="1517.4" cy="1062.7" r="9.25" fill="#3170b6"/><circle cx="1517.4" cy="1062.7" r="6.3" fill="#2b68ae"/><circle cx="1517.4" cy="1062.7" r="3" fill="#5284c2"/><circle cx="1548.3" cy="1059.4" r="9.25" fill="#3170b6"/><circle cx="1548.3" cy="1059.4" r="6.3" fill="#2b68ae"/><circle cx="1548.3" cy="1059.4" r="3" fill="#5284c2"/><circle cx="1545.9" cy="1122.0" r="9.25" fill="#3170b6"/><circle cx="1545.9" cy="1122.0" r="6.3" fill="#2b68ae"/><circle cx="1545.9" cy="1122.0" r="3" fill="#5284c2"/><circle cx="1550.7" cy="1119.6" r="9.25" fill="#3170b6"/><circle cx="1550.7" cy="1119.6" r="6.3" fill="#2b68ae"/><circle cx="1550.7" cy="1119.6" r="3" fill="#5284c2"/><circle cx="1555.6" cy="1132.6" r="9.25" fill="#3170b6"/><circle cx="1555.6" cy="1132.6" r="6.3" fill="#2b68ae"/><circle cx="1555.6" cy="1132.6" r="3" fill="#5284c2"/><circle cx="1566.8" cy="1041.6" r="9.25" fill="#3170b6"/><circle cx="1566.8" cy="1041.6" r="6.3" fill="#2b68ae"/><circle cx="1566.8" cy="1041.6" r="3" fill="#5284c2"/><circle cx="1574.1" cy="1040.7" r="9.25" fill="#3170b6"/><circle cx="1574.1" cy="1040.7" r="6.3" fill="#2b68ae"/><circle cx="1574.1" cy="1040.7" r="3" fill="#5284c2"/><circle cx="1595.2" cy="1075.7" r="9.25" fill="#3170b6"/><circle cx="1595.2" cy="1075.7" r="6.3" fill="#2b68ae"/><circle cx="1595.2" cy="1075.7" r="3" fill="#5284c2"/><circle cx="1574.4" cy="1137.4" r="9.25" fill="#3170b6"/><circle cx="1574.4" cy="1137.4" r="6.3" fill="#2b68ae"/><circle cx="1574.4" cy="1137.4" r="3" fill="#5284c2"/><circle cx="1595.2" cy="1154.5" r="9.25" fill="#3170b6"/><circle cx="1595.2" cy="1154.5" r="6.3" fill="#2b68ae"/><circle cx="1595.2" cy="1154.5" r="3" fill="#5284c2"/><circle cx="1577.0" cy="1170.4" r="9.25" fill="#3170b6"/><circle cx="1577.0" cy="1170.4" r="6.3" fill="#2b68ae"/><circle cx="1577.0" cy="1170.4" r="3" fill="#5284c2"/><circle cx="1541.6" cy="1196.7" r="9.25" fill="#3170b6"/><circle cx="1541.6" cy="1196.7" r="6.3" fill="#2b68ae"/><circle cx="1541.6" cy="1196.7" r="3" fill="#5284c2"/><circle cx="1636.4" cy="1041.6" r="9.25" fill="#9443c0"/><circle cx="1636.4" cy="1041.6" r="6.3" fill="#8b35b8"/><circle cx="1636.4" cy="1041.6" r="3" fill="#a35fc9"/><circle cx="1701.2" cy="1048.9" r="9.25" fill="#9443c0"/><circle cx="1701.2" cy="1048.9" r="6.3" fill="#8b35b8"/><circle cx="1701.2" cy="1048.9" r="3" fill="#a35fc9"/><circle cx="1638.8" cy="1069.2" r="9.25" fill="#9443c0"/><circle cx="1638.8" cy="1069.2" r="6.3" fill="#8b35b8"/><circle cx="1638.8" cy="1069.2" r="3" fill="#a35fc9"/><circle cx="1657.3" cy="1116.0" r="9.25" fill="#9443c0"/><circle cx="1657.3" cy="1116.0" r="6.3" fill="#8b35b8"/><circle cx="1657.3" cy="1116.0" r="3" fill="#a35fc9"/><circle cx="1693.6" cy="1121.2" r="9.25" fill="#9443c0"/><circle cx="1693.6" cy="1121.2" r="6.3" fill="#8b35b8"/><circle cx="1693.6" cy="1121.2" r="3" fill="#a35fc9"/><circle cx="1659.9" cy="1130.1" r="9.25" fill="#9443c0"/><circle cx="1659.9" cy="1130.1" r="6.3" fill="#8b35b8"/><circle cx="1659.9" cy="1130.1" r="3" fill="#a35fc9"/><circle cx="1678.9" cy="1129.3" r="9.25" fill="#9443c0"/><circle cx="1678.9" cy="1129.3" r="6.3" fill="#8b35b8"/><circle cx="1678.9" cy="1129.3" r="3" fill="#a35fc9"/><circle cx="1636.4" cy="1135.0" r="9.25" fill="#9443c0"/><circle cx="1636.4" cy="1135.0" r="6.3" fill="#8b35b8"/><circle cx="1636.4" cy="1135.0" r="3" fill="#a35fc9"/><circle cx="1657.3" cy="1147.2" r="9.25" fill="#9443c0"/><circle cx="1657.3" cy="1147.2" r="6.3" fill="#8b35b8"/><circle cx="1657.3" cy="1147.2" r="3" fill="#a35fc9"/><circle cx="1750.4" cy="1130.4" r="9.25" fill="#9443c0"/><circle cx="1750.4" cy="1130.4" r="6.3" fill="#8b35b8"/><circle cx="1750.4" cy="1130.4" r="3" fill="#a35fc9"/><circle cx="1726.9" cy="1149.6" r="9.25" fill="#9443c0"/><circle cx="1726.9" cy="1149.6" r="6.3" fill="#8b35b8"/><circle cx="1726.9" cy="1149.6" r="3" fill="#a35fc9"/><circle cx="1735.0" cy="1149.6" r="9.25" fill="#9443c0"/><circle cx="1735.0" cy="1149.6" r="6.3" fill="#8b35b8"/><circle cx="1735.0" cy="1149.6" r="3" fill="#a35fc9"/><circle cx="1755.8" cy="1162.6" r="9.25" fill="#9443c0"/><circle cx="1755.8" cy="1162.6" r="6.3" fill="#8b35b8"/><circle cx="1755.8" cy="1162.6" r="3" fill="#a35fc9"/><circle cx="1737.4" cy="1170.0" r="9.25" fill="#9443c0"/><circle cx="1737.4" cy="1170.0" r="6.3" fill="#8b35b8"/><circle cx="1737.4" cy="1170.0" r="3" fill="#a35fc9"/><circle cx="1701.4" cy="1170.4" r="9.25" fill="#9443c0"/><circle cx="1701.4" cy="1170.4" r="6.3" fill="#8b35b8"/><circle cx="1701.4" cy="1170.4" r="3" fill="#a35fc9"/><circle cx="1652.1" cy="1164.2" r="9.25" fill="#9443c0"/><circle cx="1652.1" cy="1164.2" r="6.3" fill="#8b35b8"/><circle cx="1652.1" cy="1164.2" r="3" fill="#a35fc9"/><circle cx="1670.0" cy="1163.4" r="9.25" fill="#9443c0"/><circle cx="1670.0" cy="1163.4" r="6.3" fill="#8b35b8"/><circle cx="1670.0" cy="1163.4" r="3" fill="#a35fc9"/><circle cx="1667.6" cy="1175.6" r="9.25" fill="#9443c0"/><circle cx="1667.6" cy="1175.6" r="6.3" fill="#8b35b8"/><circle cx="1667.6" cy="1175.6" r="3" fill="#a35fc9"/><circle cx="1631.3" cy="1176.1" r="9.25" fill="#9443c0"/><circle cx="1631.3" cy="1176.1" r="6.3" fill="#8b35b8"/><circle cx="1631.3" cy="1176.1" r="3" fill="#a35fc9"/><circle cx="1680.6" cy="1187.8" r="9.25" fill="#9443c0"/><circle cx="1680.6" cy="1187.8" r="6.3" fill="#8b35b8"/><circle cx="1680.6" cy="1187.8" r="3" fill="#a35fc9"/><circle cx="1701.4" cy="1190.2" r="9.25" fill="#9443c0"/><circle cx="1701.4" cy="1190.2" r="6.3" fill="#8b35b8"/><circle cx="1701.4" cy="1190.2" r="3" fill="#a35fc9"/><circle cx="1652.1" cy="1197.6" r="9.25" fill="#9443c0"/><circle cx="1652.1" cy="1197.6" r="6.3" fill="#8b35b8"/><circle cx="1652.1" cy="1197.6" r="3" fill="#a35fc9"/><circle cx="1671.6" cy="1196.7" r="9.25" fill="#9443c0"/><circle cx="1671.6" cy="1196.7" r="6.3" fill="#8b35b8"/><circle cx="1671.6" cy="1196.7" r="3" fill="#a35fc9"/><circle cx="1765.9" cy="1197.6" r="9.25" fill="#9443c0"/><circle cx="1765.9" cy="1197.6" r="6.3" fill="#8b35b8"/><circle cx="1765.9" cy="1197.6" r="3" fill="#a35fc9"/><circle cx="1620.4" cy="1199.2" r="9.25" fill="#9443c0"/><circle cx="1620.4" cy="1199.2" r="6.3" fill="#8b35b8"/><circle cx="1620.4" cy="1199.2" r="3" fill="#a35fc9"/><circle cx="1838.6" cy="1035.0" r="9.25" fill="#9443c0"/><circle cx="1838.6" cy="1035.0" r="6.3" fill="#8b35b8"/><circle cx="1838.6" cy="1035.0" r="3" fill="#a35fc9"/><circle cx="1838.6" cy="1076.0" r="9.25" fill="#9443c0"/><circle cx="1838.6" cy="1076.0" r="6.3" fill="#8b35b8"/><circle cx="1838.6" cy="1076.0" r="3" fill="#a35fc9"/><circle cx="1836.2" cy="1130.1" r="9.25" fill="#9443c0"/><circle cx="1836.2" cy="1130.1" r="6.3" fill="#8b35b8"/><circle cx="1836.2" cy="1130.1" r="3" fill="#a35fc9"/><circle cx="1657.3" cy="1138.0" r="9.25" fill="#9443c0"/><circle cx="1657.3" cy="1138.0" r="6.3" fill="#8b35b8"/><circle cx="1657.3" cy="1138.0" r="3" fill="#a35fc9"/><circle cx="1636.4" cy="1130.0" r="9.25" fill="#9443c0"/><circle cx="1636.4" cy="1130.0" r="6.3" fill="#8b35b8"/><circle cx="1636.4" cy="1130.0" r="3" fill="#a35fc9"/></svg><div class="t" style="left:100px;width:93.5px;text-align:right;top:1005.65px;font-size:14px;color:#333;letter-spacing:-0.35px">$3,129</div><div class="t" style="left:100px;width:93.5px;text-align:right;top:1071.55px;font-size:14px;color:#333;letter-spacing:-0.35px">$2,629</div><div class="t" style="left:100px;width:93.5px;text-align:right;top:1136.65px;font-size:14px;color:#333;letter-spacing:-0.35px">$2,129</div><svg class="abs" style="left:431px;top:300px" width="14" height="21" viewBox="0 0 14 21"><path d="M1,1 L1,16 L4.5,12.5 L7.5,19 L9.5,18 L6.6,11.8 L11.5,11.8 Z" fill="#fff" stroke="#000" stroke-width="1.1" stroke-linejoin="round"/></svg><svg class="abs" style="left:1901px;top:0" width="19" height="1200" viewBox="0 0 19 1200"><path d="M4,14 L9.5,6 L15,14 Z" fill="#0b2239"/><rect x="4.5" y="23" width="10.5" height="295" rx="5.25" fill="#0b2239"/><path d="M4,1185 L15,1185 L9.5,1193 Z" fill="#0b2239"/></svg><div class="abs" style="left:0;top:1199px;width:1920px;height:1px;background:#1a1a1a"></div></body></html>
